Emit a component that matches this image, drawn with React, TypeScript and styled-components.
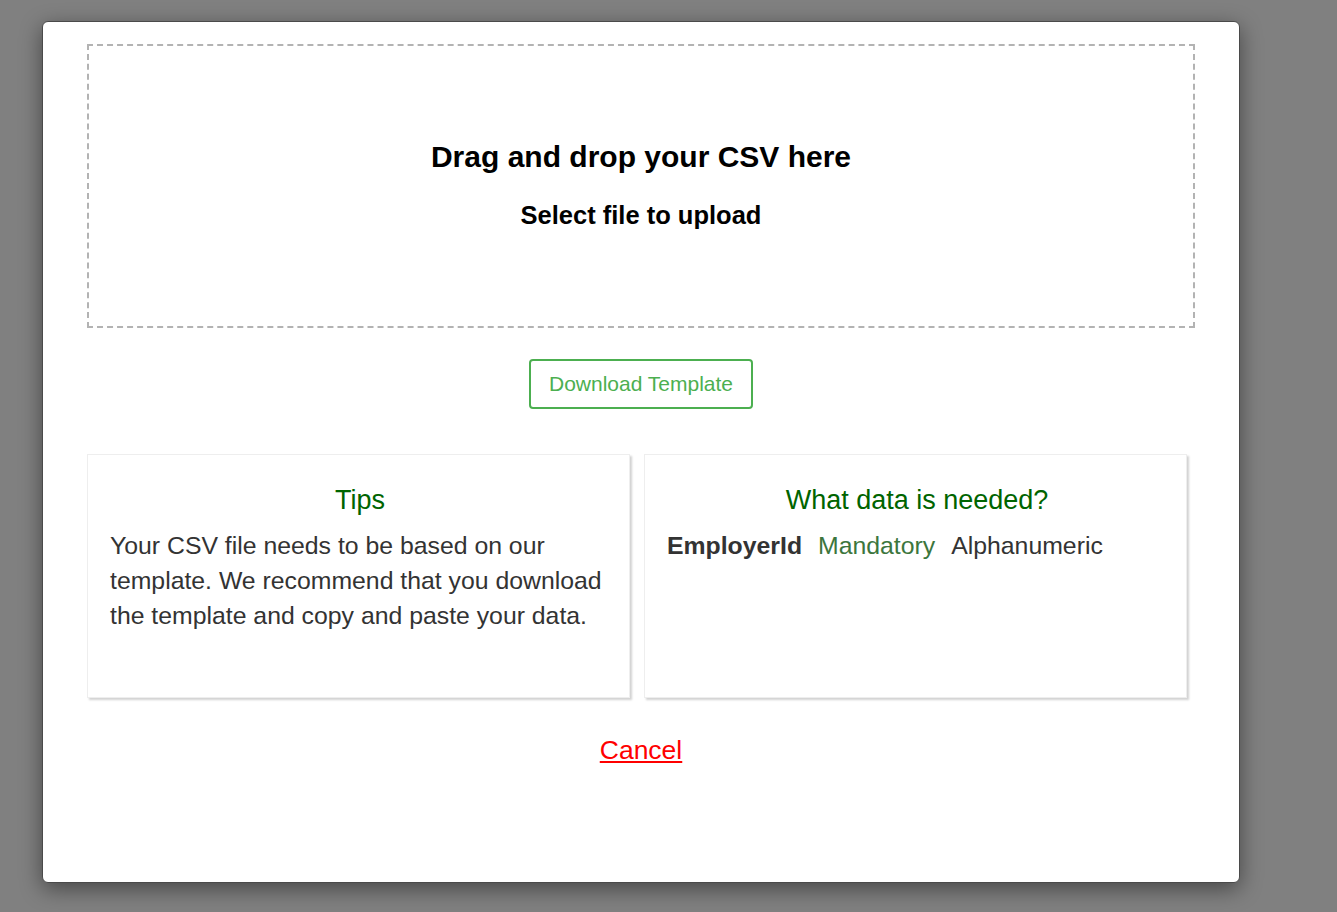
import React from 'react';
import styled, { createGlobalStyle } from 'styled-components';

const GlobalStyle = createGlobalStyle`
  html, body {
    margin: 0;
    padding: 0;
    background: #808080;
    font-family: "Liberation Sans", Arial, sans-serif;
  }
`;

const Backdrop = styled.div`
  width: 1337px;
  height: 912px;
  background: #808080;
  padding-top: 21px;
  box-sizing: border-box;
  overflow: hidden;
`;

const Modal = styled.div`
  margin-left: 42px;
  width: 1198px;
  height: 862px;
  box-sizing: border-box;
  background: #fff;
  border: 1px solid #4a4a4a;
  border-radius: 6px;
  box-shadow: 0 6px 22px rgba(0, 0, 0, 0.45);
  padding: 22px 44px 0 44px;
  display: flex;
  flex-direction: column;
  align-items: center;
`;

const DropZone = styled.div`
  width: 100%;
  height: 284px;
  box-sizing: border-box;
  border: 2px dashed #b3b3b3;
  display: flex;
  flex-direction: column;
  align-items: center;
  justify-content: center;
  padding-bottom: 2px;
`;

const DropTitle = styled.div`
  font-size: 30px;
  line-height: 34px;
  font-weight: bold;
  color: #000;
  margin-bottom: 27px;
`;

const DropSub = styled.div`
  font-size: 25.5px;
  line-height: 29px;
  font-weight: bold;
  color: #000;
`;

const TemplateButton = styled.button`
  margin-top: 31px;
  width: 224px;
  height: 50px;
  padding: 0;
  background: #fff;
  border: 2px solid #4caf50;
  border-radius: 4px;
  color: #4caf50;
  font-family: "Liberation Sans", Arial, sans-serif;
  font-size: 21px;
  cursor: pointer;
`;

const Cards = styled.div`
  margin-top: 45px;
  width: 100%;
  display: grid;
  grid-template-columns: 543px 543px;
  gap: 14px;
`;

const Card = styled.div`
  height: 244px;
  box-sizing: border-box;
  border: 1px solid #eeeeee;
  box-shadow: 2px 2px 2px rgba(0, 0, 0, 0.18);
  padding: 29px 19px 0 22px;
`;

const CardTitle = styled.div`
  text-align: center;
  font-size: 27px;
  color: #006400;
  line-height: 32px;
  margin-bottom: 12px;
`;

const CardText = styled.p`
  margin: 0;
  font-size: 24.8px;
  line-height: 35px;
  color: #333;
`;

const Field = styled.span<{ $tone: 'name' | 'req' | 'type' }>`
  margin-right: 16px;
  font-weight: ${p => (p.$tone === 'name' ? 'bold' : 'normal')};
  color: ${p => (p.$tone === 'req' ? '#3c763d' : '#333')};
`;

const CancelLink = styled.a`
  margin-top: 37px;
  font-size: 26.5px;
  color: #ff0000;
  text-decoration: underline;
  cursor: pointer;
`;

export default function App() {
  return (
    <>
      <GlobalStyle />
      <Backdrop>
        <Modal>
          <DropZone>
            <DropTitle>Drag and drop your CSV here</DropTitle>
            <DropSub>Select file to upload</DropSub>
          </DropZone>
          <TemplateButton>Download Template</TemplateButton>
          <Cards>
            <Card>
              <CardTitle>Tips</CardTitle>
              <CardText>
                Your CSV file needs to be based on our template. We recommend that you download
                the template and copy and paste your data.
              </CardText>
            </Card>
            <Card>
              <CardTitle>What data is needed?</CardTitle>
              <CardText>
                <Field $tone="name">EmployerId</Field>
                <Field $tone="req">Mandatory</Field>
                <Field $tone="type">Alphanumeric</Field>
              </CardText>
            </Card>
          </Cards>
          <CancelLink>Cancel</CancelLink>
        </Modal>
      </Backdrop>
    </>
  );
}
